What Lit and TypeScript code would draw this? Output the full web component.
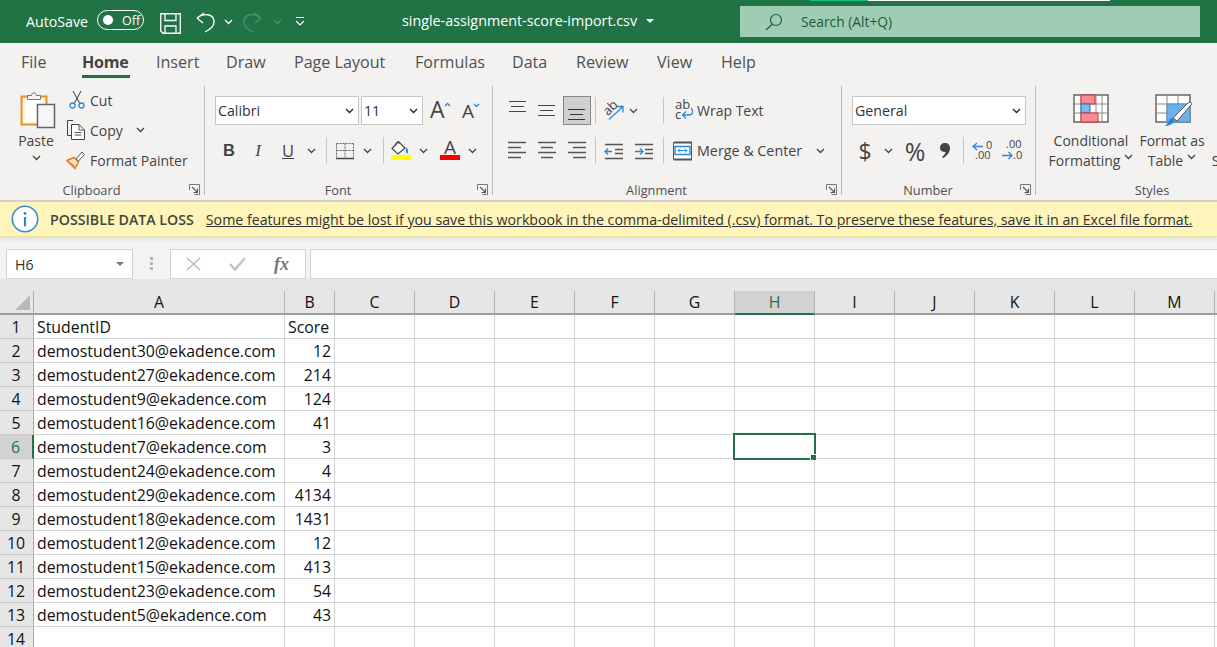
import { LitElement, html, css, svg } from "lit";
import { customElement } from "lit/decorators.js";

const chev = (c = "#444") => html`<svg class="chev" width="9" height="6" viewBox="0 0 9 6"><path d="M1 1l3.500 3.500L8 1" fill="none" stroke=${c} stroke-width="1.300"/></svg>`;
const launcher = html`<svg class="launch" width="11" height="11" viewBox="0 0 11 11"><path d="M.5 6V.5H10.500V10.500H5.500" fill="none" stroke="#777"/><path d="M3 3l5.500 5.500M8.500 4.500v4h-4" fill="none" stroke="#555" stroke-width="1.100"/></svg>`;
const lines = (ys: number[][], c = "#444", w = 1) => html`<svg width="20" height="20" viewBox="0 0 20 20">${ys.map(([x1, x2, y]) => svg`<path d="M${x1} ${y}.5H${x2}" stroke=${c} stroke-width=${w}/>`)}</svg>`;
const alignRows = (xs: number[][]) => lines(xs.map(([a, b], i) => [a, b, 1 + i * 5]), "#555", 1.5);

const pasteIcon = html`<svg width="36" height="40" viewBox="0 0 36 40"><path d="M1.500 6.500H26.500V34.500H1.500z" fill="#fdf3d8" stroke="#e8912d" stroke-width="2"/><path d="M5 8.500H23V32H5z" fill="#fff"/><path d="M7.500 9.500V5.500H11.500C11.500 2 16.500 2 16.500 5.500H20.500V9.500z" fill="#f3f2f1" stroke="#777"/><path d="M17.500 14.500H34.500V37.500H17.500z" fill="#f6f6f6" stroke="#666" stroke-width="1.500"/></svg>`;
const cutIcon = html`<svg width="16" height="20" viewBox="0 0 16 20"><path d="M4 1l6.500 12M12 1L5.500 13" fill="none" stroke="#555" stroke-width="1.100"/><circle cx="3.500" cy="15.500" r="2.500" fill="none" stroke="#2b88d8" stroke-width="1.300"/><circle cx="12.500" cy="15.500" r="2.500" fill="none" stroke="#2b88d8" stroke-width="1.300"/></svg>`;
const copyIcon = html`<svg width="20" height="20" viewBox="0 0 20 20"><path d="M7 .5H1.500V15.500H5" fill="none" stroke="#444"/><path d="M5.500 4.500H13L18.500 10V19.500H5.500z" fill="#fff" stroke="#444"/><path d="M13 4.500V10H18.500M8.500 12.500H15.500M8.500 15H15.500" fill="none" stroke="#555"/></svg>`;
const painterIcon = html`<svg width="20" height="20" viewBox="0 0 20 20"><path d="M1 10.500L8 7.500L12.500 12L9 18.500z" fill="#fbe3c5" stroke="#e3791e" stroke-width="1.500"/><path d="M3.500 12.500L9 16" stroke="#e3791e"/><path d="M10 9l6-7 2.500 2.500-6 6.500z" fill="#fff" stroke="#555"/></svg>`;
const growIcon = html`<svg width="20" height="20" viewBox="0 0 20 20"><text x="0" y="17" class="svgBig">A</text><path d="M15 5l2.500-2.500L20 5" fill="none" stroke="#2b88d8" stroke-width="1.300"/></svg>`;
const shrinkIcon = html`<svg width="20" height="20" viewBox="0 0 20 20"><text x="0" y="17" class="svgMid">A</text><path d="M12 3l2.500 2.500L17 3" fill="none" stroke="#2b88d8" stroke-width="1.300"/></svg>`;
const bordersIcon = html`<svg width="20" height="20" viewBox="0 0 20 20"><path d="M1.500 2.500H18.500M1.500 9.500H18.500M1.500 2.500V16M18.500 2.500V16M10 2.500V16" stroke="#666" stroke-dasharray="2 1" fill="none"/><path d="M1 17.500H19" stroke="#444" stroke-width="1.500"/></svg>`;
const fillIcon = html`<svg width="21" height="22" viewBox="0 0 21 22"><path d="M8.500 1.500L2 8.500L8 14L15 8z" fill="#fff" stroke="#444" stroke-width="1.200"/><path d="M6 5.500C5 2 8.500 1 9.500 4" fill="none" stroke="#444"/><path d="M16.500 7c2 3 2 5 1 6.500-1.500 0-2-2-1-6.500z" fill="#2b88d8"/><path d="M1 15h20v5H1z" fill="#ffff00"/></svg>`;
const fontColorIcon = html`<svg width="20" height="22" viewBox="0 0 20 22"><text x="10" y="14" text-anchor="middle" class="svgA">A</text><path d="M0 15h20v5H0z" fill="#f00"/></svg>`;
const orientIcon = html`<svg width="22" height="22" viewBox="0 0 22 22"><text x="1" y="13" class="svgAb" transform="rotate(-45 7 10)">ab</text><path d="M6 19.500L19.500 7M14 6.500h6v6" fill="none" stroke="#2b88d8" stroke-width="1.300"/></svg>`;
const wrapIcon = html`<svg width="19" height="21" viewBox="0 0 19 21"><text x="0" y="9" class="svgSm">ab</text><text x="0" y="19" class="svgSm">c</text><path d="M16 8c3 3 2 7-2 7H8M11 11.500L7.500 15l3.500 3.500" fill="none" stroke="#2b88d8" stroke-width="1.300"/></svg>`;
const mergeIcon = html`<svg width="20" height="20" viewBox="0 0 20 20"><path d="M.5 1.500H18.500V18.500H.5z" fill="#fff" stroke="#555"/><path d="M1 1.500h18M1 18.500h18" stroke="#555" stroke-width="2"/><path d="M2 5.500H17V13.500H2z" fill="#fff" stroke="#2b88d8" stroke-width="1.400"/><path d="M5 9.500H14M7 7.500L5 9.500l2 2M12 7.500l2 2-2 2" fill="none" stroke="#2b88d8"/></svg>`;
const indentL = html`<svg width="20" height="18" viewBox="0 0 20 18"><path d="M1 2.500H19M11 7.500H19M11 11.500H19M1 16.500H19" stroke="#555" stroke-width="1.300"/><path d="M8 9.500H1M4 6.500L1 9.500l3 3" fill="none" stroke="#2b88d8" stroke-width="1.300"/></svg>`;
const indentR = html`<svg width="20" height="18" viewBox="0 0 20 18"><path d="M1 2.500H19M11 7.500H19M11 11.500H19M1 16.500H19" stroke="#555" stroke-width="1.300"/><path d="M1 9.500H9M6 6.500l3 3-3 3" fill="none" stroke="#2b88d8" stroke-width="1.300"/></svg>`;
const commaIcon = html`<svg width="14" height="20" viewBox="0 0 14 20"><path d="M7 2c3 0 5 2 5 5 0 4-3 8-7 10l-1-1c2-1.500 3.500-3.500 3.500-5C4 11 2 9.500 2 7c0-3 2-5 5-5z" fill="#444"/></svg>`;
const incIcon = html`<svg width="22" height="22" viewBox="0 0 22 22"><path d="M12 6.500H2M6 3L2 6.500 6 10" fill="none" stroke="#2b88d8" stroke-width="1.300"/><text x="15" y="9" class="svgNum">0</text><text x="4" y="19" class="svgNum">.00</text></svg>`;
const decIcon = html`<svg width="22" height="22" viewBox="0 0 22 22"><text x="5" y="8" class="svgNum">.00</text><path d="M1 15.500H11M7.500 12L11 15.500 7.500 19" fill="none" stroke="#2b88d8" stroke-width="1.300"/><text x="12" y="19" class="svgNum">.0</text></svg>`;
const condIcon = html`<svg width="36" height="29" viewBox="0 0 36 29"><path d="M1 1h34v27H1z" fill="#fff" stroke="#666" stroke-width="1.500"/><path d="M1 10h34M1 19h34M8 1v27M23 1v27M29 1v27" stroke="#888"/><path d="M8 1H22V10H8z" fill="#fb8a92" stroke="#d92b2b"/><path d="M8 10H17V19H8z" fill="#82b7e6" stroke="#2b6fb5"/><path d="M8 19H25V28H8z" fill="#fb8a92" stroke="#d92b2b"/></svg>`;
const tableIcon = html`<svg class="tb" width="38" height="29" viewBox="0 0 38 29"><path d="M1 1h34v27H1z" fill="#fff" stroke="#666" stroke-width="1.500"/><path d="M1 10h34M1 19h34M12 1v27M23 1v27" stroke="#888"/><path d="M12 10H35V28H12z" fill="#6fb0ea" stroke="#4a90d0"/><path d="M18 24L33 9c2-2 5 0 3 2L22 27z" fill="#fff" stroke="#555"/><path d="M10 32c3 0 6-1 8-3 3-3 1-5-1-5-3 0-3 5-7 8z" fill="#2b88d8"/></svg>`;
const save = html`<svg width="21" height="21" viewBox="0 0 21 21"><path d="M.75 .75H20.250V20.250H3L.75 18z" fill="none" stroke="#fff" stroke-width="1.300"/><path d="M5 1V7.500H16V1M5 20V13H16V20" fill="none" stroke="#fff" stroke-width="1.300"/></svg>`;
const undo = (c: string) => html`<svg width="20" height="21" viewBox="0 0 20 21"><path d="M1 6L8 1M1 6l6 5M1 6C7 1 18 1 18 10c0 4-5 8-9 10" fill="none" stroke=${c} stroke-width="1.300"/></svg>`;
const redo = (c: string) => html`<svg width="20" height="21" viewBox="0 0 20 21"><path d="M19 6L12 1M19 6l-6 5M19 6C13 1 2 1 2 10c0 4 5 8 9 10" fill="none" stroke=${c} stroke-width="1.300"/></svg>`;
const qat = html`<svg width="10" height="9" viewBox="0 0 10 9"><path d="M1 .5H9M1 4l4 4 4-4" fill="none" stroke="#fff" stroke-width="1.100"/></svg>`;
const search = html`<svg width="18" height="18" viewBox="0 0 18 18"><circle cx="11" cy="7" r="5.500" fill="none" stroke="#1f5f3c" stroke-width="1.200"/><path d="M7 11.500L1 17" stroke="#1f5f3c" stroke-width="1.300"/></svg>`;
const info = html`<svg width="28" height="28" viewBox="0 0 28 28"><circle cx="14" cy="14" r="12.700" fill="#fff" stroke="#2f8fd4" stroke-width="1.600"/><circle cx="14" cy="8.500" r="1.400" fill="#2b88d8"/><path d="M14 12v9.500" stroke="#2b88d8" stroke-width="2.200"/></svg>`;
const xIcon = html`<svg width="15" height="14" viewBox="0 0 15 14"><path d="M1 1l13 12M14 1L1 13" stroke="#bdbdbd" stroke-width="1.600"/></svg>`;
const okIcon = html`<svg width="17" height="14" viewBox="0 0 17 14"><path d="M1 7l5 5.500L16 1" fill="none" stroke="#c4c4c4" stroke-width="2.600"/></svg>`;

const COLS = ["A", "B", "C", "D", "E", "F", "G", "H", "I", "J", "K", "L", "M", ""];
const DATA: [string, string][] = [
  ["StudentID", "Score"],
  ["demostudent30@ekadence.com", "12"],
  ["demostudent27@ekadence.com", "214"],
  ["demostudent9@ekadence.com", "124"],
  ["demostudent16@ekadence.com", "41"],
  ["demostudent7@ekadence.com", "3"],
  ["demostudent24@ekadence.com", "4"],
  ["demostudent29@ekadence.com", "4134"],
  ["demostudent18@ekadence.com", "1431"],
  ["demostudent12@ekadence.com", "12"],
  ["demostudent15@ekadence.com", "413"],
  ["demostudent23@ekadence.com", "54"],
  ["demostudent5@ekadence.com", "43"],
  ["", ""],
];
const TABS = ["File", "Home", "Insert", "Draw", "Page Layout", "Formulas", "Data", "Review", "View", "Help"];

@customElement("app-root")
export class AppRoot extends LitElement {
  static styles = css`
    :host { display: block; width: 1217px; height: 647px; overflow: hidden; background: #fff;
      font-family: "Open Sans", "Noto Sans", sans-serif; color: #444; font-size: 14px; }
    svg { display: block; flex: none; overflow: visible; }
    .svgA { font: 400 19px "Open Sans", sans-serif; fill: #444; }
    .svgBig { font: 400 23px "Open Sans", sans-serif; fill: #444; }
    .svgMid { font: 400 19px "Open Sans", sans-serif; fill: #444; }
    .svgAb { font: 400 13px "Open Sans", sans-serif; fill: #444; }
    .svgSm { font: 400 13px "Open Sans", sans-serif; fill: #444; }
    .svgNum { font: 400 11px "Open Sans", sans-serif; fill: #444; }

    .title { position: relative; height: 43px; background: #217346; color: #fff; display: grid; align-items: center;
      grid-template-columns: 26px 71px 47px 16px 20px 16px 20px 8px 9px 9px 20px 11px 9px 13px 10px 97px 238px 100px 460px; justify-items: start; }
    .title .t1 { grid-column: 2; font-size: 14.200px; margin-bottom: 1px; }
    .progress { position: absolute; left: 810px; top: 0; width: 300px; height: 1px; background: linear-gradient(90deg, #10c080 58px, #fff 58px); }
    .toggle { grid-column: 3; width: 47px; height: 20px; margin-bottom: 3px; box-sizing: border-box; border: 1px solid #fff; border-radius: 10px; display: flex; align-items: center; gap: 9px; padding-left: 5px; font-size: 12.500px; }
    .toggle i { width: 10px; height: 10px; border-radius: 50%; background: #fff; }
    .save { grid-column: 5; margin-top: 3px; }
    .undo { margin-top: 2px; }
    .fname { grid-column: 17; font-size: 14.300px; white-space: nowrap; display: flex; align-items: center; gap: 9px; margin-bottom: 2px; }
    .caret { width: 0; height: 0; border-left: 4px solid transparent; border-right: 4px solid transparent; border-top: 4px solid #fff; }
    .search { grid-column: 19; width: 460px; height: 31px; background: #9fcdb3; color: #1d5a3a; display: flex; align-items: center; gap: 18px; padding-left: 25px; box-sizing: border-box; font-size: 13.800px; }

    .tabs { height: 43px; background: #f3f2f1; box-sizing: border-box; padding: 0 0 5px 21px; display: grid; align-items: center;
      grid-template-columns: 61px 74px 70px 68px 121px 97px 64px 81px 64px 50px; font-size: 16.100px; color: #505050; }
    .tab { white-space: nowrap; position: relative; line-height: 37px; }
    .tab.on { font-weight: 700; color: #444; width: 48px; letter-spacing: -.3px; }
    .tab.on::after { content: ""; position: absolute; left: 0; right: 0; bottom: 3px; height: 3px; background: #217346; }

    .ribbon { background: #f3f2f1; display: flex; border-bottom: 2px solid #d2d0ce; height: 114px; overflow: hidden; }
    .group { flex: none; display: flex; flex-direction: column; box-sizing: border-box; height: 109px; border-right: 1px solid #b8b8b8; }
    .g-clip { width: 205px; } .g-font { width: 288px; } .g-align { width: 349px; } .g-num { width: 194px; }
    .g-style { width: 236px; border-right: none; }
    .body { flex: 1; min-height: 0; }
    .label { height: 19px; flex: none; margin-bottom: -4px; display: flex; align-items: center; font-size: 12.800px; color: #505050; padding-right: 4px; }
    .label span { flex: 1; text-align: center; padding-right: 6px; }
    .g-style .label span { padding-right: 0; }
    .label .launch { margin-top: -1px; }

    .g-clip .body { display: grid; grid-template-columns: 66px 1fr; }
    .paste { display: flex; flex-direction: column; align-items: center; padding: 4px 0 0 6px; box-sizing: border-box; }
    .paste svg:first-child { margin-left: 3px; }
    .paste span { margin-top: 1px; line-height: 20px; }
    .paste .chev { margin-top: 4px; }
    .stack { display: grid; grid-template-rows: repeat(3, 30px); margin-top: -1px; }
    .act { display: grid; grid-template-columns: 24px auto auto; justify-content: start; align-items: center; justify-items: start; white-space: nowrap; }
    .act.cut svg:first-child { margin-left: 3px; }
    .act .chev { margin-left: 13px; }

    .rows { display: grid; grid-template-rows: 29px 29px; row-gap: 11px; padding-top: 10px; height: 69px; }
    .r { display: grid; align-items: center; justify-items: center; justify-content: start; position: relative; }
    .sep { width: 1px; height: 27px; background: #c8c6c4; }
    .box { background: #fff; border: 1px solid #c6c6c6; height: 29px; box-sizing: border-box; display: flex; align-items: center; justify-content: space-between; padding: 0 4px 0 2px; font-size: 14.200px; color: #333; justify-self: start; }

    .f1 { grid-template-columns: 10px 144px 2px 62px 7px 20px 12px 20px; }
    .f1 > :nth-child(1) { grid-column: 2; width: 144px; } .f1 > :nth-child(2) { grid-column: 4; width: 62px; }
    .f2 { grid-template-columns: 14px 20px 9px 20px 10px 20px 9px 9px 10px 1px 7px 21px 8px 9px 11px 1px 6px 21px 8px 9px 12px 20px 8px 9px; }
    .f2 b { font: 700 16.500px "Liberation Sans", sans-serif; color: #444; }
    .f2 em { font: italic 400 17px "Liberation Serif", serif; color: #444; }
    .f2 u { font: 400 16.500px "Open Sans", sans-serif; }

    .al1 { grid-template-columns: 10px 30px 28px 2px 28px 4px 1px 7px 22px 4px 9px 25px 1px 11px 19px 3px auto; }
    .selAlign { width: 28px; height: 29px; box-sizing: border-box; background: #d2d0ce; border: 1px solid #8a8886; display: flex; align-items: center; justify-content: center; }
    .al2 { grid-template-columns: 10px 28px 32px 28px 4px 1px 8px 20px 10px 20px 9px 1px 9px 20px 4px 107px 12px 9px; }
    .txt { justify-self: start; white-space: nowrap; }
    .txt.merge { font-size: 14.300px; }

    .n1 { grid-template-columns: 10px 174px; }
    .n2 { grid-template-columns: 16px 14px 10px 12px 6px 30px 7px 16px 10px 1px 7px 22px 8px 22px; }
    .dollar { font-size: 23px; line-height: 28px; }
    .pct { font-size: 25px; line-height: 28px; }

    .g-style .body { display: grid; grid-template-columns: 110px 52px 78px; padding-top: 8px; justify-items: center; }
    .st { display: flex; flex-direction: column; align-items: center; text-align: center; white-space: nowrap; }
    .st svg:first-child { margin-bottom: 8px; }
    .st svg.tb { margin-left: 4px; }
    .st .gap { height: 37px; }
    .st > div { display: flex; align-items: center; gap: 4px; }
    .st > span, .st > div { line-height: 20px; height: 20px; font-size: 14px; }
    .st > .gap { height: 37px; }

    .msg { height: 35px; background: #fff4b9; border-bottom: 1px solid #e8dfa2; box-sizing: border-box; display: flex; align-items: center; padding-left: 11px; white-space: nowrap; font-size: 14.200px; color: #444; box-shadow: 0 3px 5px rgba(0,0,0,.08); position: relative; }
    .msg strong { font-weight: 600; margin-left: 11px; margin-right: 12px; }
    .msg a { color: #333; text-decoration: underline; }

    .fbar { height: 54px; display: flex; box-sizing: border-box; padding-top: 12px; align-items: flex-start; background: linear-gradient(#f3f3f3 42px, #e6e6e6 42px); }
    .fbox { background: #fff; border: 1px solid #d2d2d2; height: 30px; box-sizing: border-box; display: flex; align-items: center; }
    .name { width: 127px; margin-left: 6px; padding: 0 8px; justify-content: space-between; font-size: 14.200px; color: #333; }
    .name .c2 { width: 0; height: 0; border-left: 4px solid transparent; border-right: 4px solid transparent; border-top: 4px solid #777; }
    .dots { width: 37px; display: flex; flex-direction: column; align-items: center; gap: 2px; padding-top: 8px; }
    .dots i { width: 3px; height: 3px; background: #b4b4b4; }
    .fx { width: 136px; padding-left: 15px; gap: 28px; }
    .fx span { font: italic 700 18px "Liberation Serif", serif; color: #777; }
    .input { flex: 1; margin-left: 4px; border-right: none; }

    .sheet { display: grid; grid-template-columns: 34px 251px 50px 80px 80px 80px 80px 80px 80px 80px 80px 80px 80px 80px 40px; grid-auto-rows: 24px; font-family: "Open Sans", sans-serif; font-size: 15.850px; color: #111; }
    .corner { background: #e6e6e6; border-right: 1px solid #ababab; border-bottom: 2px solid #9e9e9e; box-sizing: border-box; display: flex; align-items: flex-end; justify-content: flex-end; padding: 0 3px 3px 0; }
    .tri { width: 0; height: 0; border-left: 15px solid transparent; border-bottom: 15px solid #b9b9b9; }
    .ch { background: #e6e6e6; border-right: 1px solid #b4b4b4; border-bottom: 2px solid #9e9e9e; box-sizing: border-box; display: flex; align-items: center; justify-content: center; }
    .ch.sel { background: #d2d2d2; color: #217346; border-bottom-color: #217346; }
    .rh { background: #e6e6e6; border-right: 1px solid #ababab; border-bottom: 1px solid #c8c8c8; box-sizing: border-box; display: flex; align-items: center; justify-content: center; padding-right: 1px; }
    .rh.sel { background: #d2d2d2; color: #217346; border-right: 2px solid #217346; }
    .c { border-right: 1px solid #d4d4d4; border-bottom: 1px solid #d4d4d4; box-sizing: border-box; padding: 1px 3px 0 3px; display: flex; align-items: center; white-space: nowrap; position: relative; }
    .c.num { justify-content: flex-end; }
    .cursor { position: absolute; left: -2px; top: -2px; width: 83px; height: 27px; box-sizing: border-box; border: 2px solid #217346; z-index: 1; }
    .cursor::after { content: ""; position: absolute; right: -3px; bottom: -3px; width: 5px; height: 5px; background: #217346; border: 1px solid #fff; }
  `;

  private titleBar() {
    return html`<div class="title">
      <div class="progress"></div>
      <span class="t1">AutoSave</span>
      <div class="toggle"><i></i><span>Off</span></div>
      <span class="save">${save}</span>
      <span class="undo" style="grid-column:7">${undo("#fff")}</span>
      <span style="grid-column:9">${chev("#fff")}</span>
      <span class="undo" style="grid-column:11">${redo("#4b9470")}</span>
      <span style="grid-column:13">${chev("#4b9470")}</span>
      <span style="grid-column:15">${qat}</span>
      <div class="fname"><span>single-assignment-score-import.csv</span><i class="caret"></i></div>
      <div class="search">${search}<span>Search (Alt+Q)</span></div>
    </div>`;
  }

  private ribbon() {
    const a = (l: number[][]) => alignRows(l);
    return html`<div class="tabs">${TABS.map((t) => html`<div class="tab ${t === "Home" ? "on" : ""}">${t}</div>`)}</div>
    <div class="ribbon">
      <section class="group g-clip">
        <div class="body">
          <div class="paste">${pasteIcon}<span>Paste</span>${chev()}</div>
          <div class="stack">
            <div class="act cut">${cutIcon}<span>Cut</span></div>
            <div class="act">${copyIcon}<span>Copy</span>${chev()}</div>
            <div class="act">${painterIcon}<span>Format Painter</span></div>
          </div>
        </div>
        <div class="label"><span>Clipboard</span>${launcher}</div>
      </section>
      <section class="group g-font">
        <div class="body rows">
          <div class="r f1">
            <div class="box"><span>Calibri</span>${chev("#222")}</div>
            <div class="box"><span>11</span>${chev("#222")}</div>
            <span style="grid-column:6">${growIcon}</span>
            <span style="grid-column:8">${shrinkIcon}</span>
          </div>
          <div class="r f2">
            <b style="grid-column:2">B</b><em style="grid-column:4">I</em><u style="grid-column:6">U</u>
            <span style="grid-column:8">${chev()}</span><i class="sep" style="grid-column:10"></i>
            <span style="grid-column:12">${bordersIcon}</span><span style="grid-column:14">${chev()}</span>
            <i class="sep" style="grid-column:16"></i><span style="grid-column:18">${fillIcon}</span>
            <span style="grid-column:20">${chev()}</span><span style="grid-column:22">${fontColorIcon}</span>
            <span style="grid-column:24">${chev()}</span>
          </div>
        </div>
        <div class="label"><span>Font</span>${launcher}</div>
      </section>
      <section class="group g-align">
        <div class="body rows">
          <div class="r al1">
            <span style="grid-column:2">${lines([[1, 18, 0], [3, 16, 5], [1, 18, 10]])}</span>
            <span style="grid-column:3">${lines([[1, 18, 4], [3, 16, 9], [1, 18, 14]])}</span>
            <div class="selAlign" style="grid-column:5">${lines([[1, 18, 8], [3, 16, 13], [1, 18, 18]], "#333")}</div>
            <i class="sep" style="grid-column:7"></i>
            <span style="grid-column:9">${orientIcon}</span><span style="grid-column:11">${chev()}</span>
            <i class="sep" style="grid-column:13"></i>
            <span style="grid-column:15">${wrapIcon}</span><span class="txt" style="grid-column:17">Wrap Text</span>
          </div>
          <div class="r al2">
            <span style="grid-column:2">${a([[1, 19], [1, 14], [1, 19], [1, 14]])}</span>
            <span style="grid-column:3">${a([[1, 19], [4, 16], [1, 19], [4, 16]])}</span>
            <span style="grid-column:4">${a([[1, 19], [6, 19], [1, 19], [6, 19]])}</span>
            <i class="sep" style="grid-column:6"></i>
            <span style="grid-column:8">${indentL}</span><span style="grid-column:10">${indentR}</span>
            <i class="sep" style="grid-column:12"></i>
            <span style="grid-column:14">${mergeIcon}</span><span class="txt merge" style="grid-column:16">Merge &amp; Center</span>
            <span style="grid-column:18">${chev()}</span>
          </div>
        </div>
        <div class="label"><span>Alignment</span>${launcher}</div>
      </section>
      <section class="group g-num">
        <div class="body rows">
          <div class="r n1"><div class="box" style="grid-column:2;width:174px"><span>General</span>${chev("#222")}</div></div>
          <div class="r n2">
            <span class="dollar" style="grid-column:2">$</span><span style="grid-column:4">${chev()}</span>
            <span class="pct" style="grid-column:6">%</span><span style="grid-column:8">${commaIcon}</span>
            <i class="sep" style="grid-column:10"></i><span style="grid-column:12">${incIcon}</span><span style="grid-column:14">${decIcon}</span>
          </div>
        </div>
        <div class="label"><span>Number</span>${launcher}</div>
      </section>
      <section class="group g-style">
        <div class="body">
          <div class="st">${condIcon}<span>Conditional</span><div>Formatting ${chev()}</div></div>
          <div class="st">${tableIcon}<span>Format as</span><div>Table ${chev()}</div></div>
          <div class="st"><div class="gap"></div><span>Cell</span><div>Styles ${chev()}</div></div>
        </div>
        <div class="label"><span>Styles</span></div>
      </section>
    </div>`;
  }

  private sheet() {
    return html`<div class="sheet">
      <div class="corner"><i class="tri"></i></div>
      ${COLS.map((c) => html`<div class="ch ${c === "H" ? "sel" : ""}">${c}</div>`)}
      ${DATA.map((row, i) => html`
        <div class="rh ${i === 5 ? "sel" : ""}">${i + 1}</div>
        ${COLS.map((_, j) => html`<div class="c ${j === 1 && i > 0 ? "num" : ""}">
          ${j === 0 ? row[0] : j === 1 ? row[1] : ""}
          ${i === 5 && j === 7 ? html`<div class="cursor"></div>` : ""}
        </div>`)}
      `)}
    </div>`;
  }

  render() {
    return html`
      ${this.titleBar()}
      ${this.ribbon()}
      <div class="msg">${info}<strong>POSSIBLE DATA LOSS</strong><a>Some features might be lost if you save this workbook in the comma-delimited (.csv) format. To preserve these features, save it in an Excel file format.</a></div>
      <div class="fbar">
        <div class="fbox name"><span>H6</span><i class="c2"></i></div>
        <div class="dots"><i></i><i></i><i></i></div>
        <div class="fbox fx">${xIcon}${okIcon}<span>fx</span></div>
        <div class="fbox input"></div>
      </div>
      ${this.sheet()}
    `;
  }
}
